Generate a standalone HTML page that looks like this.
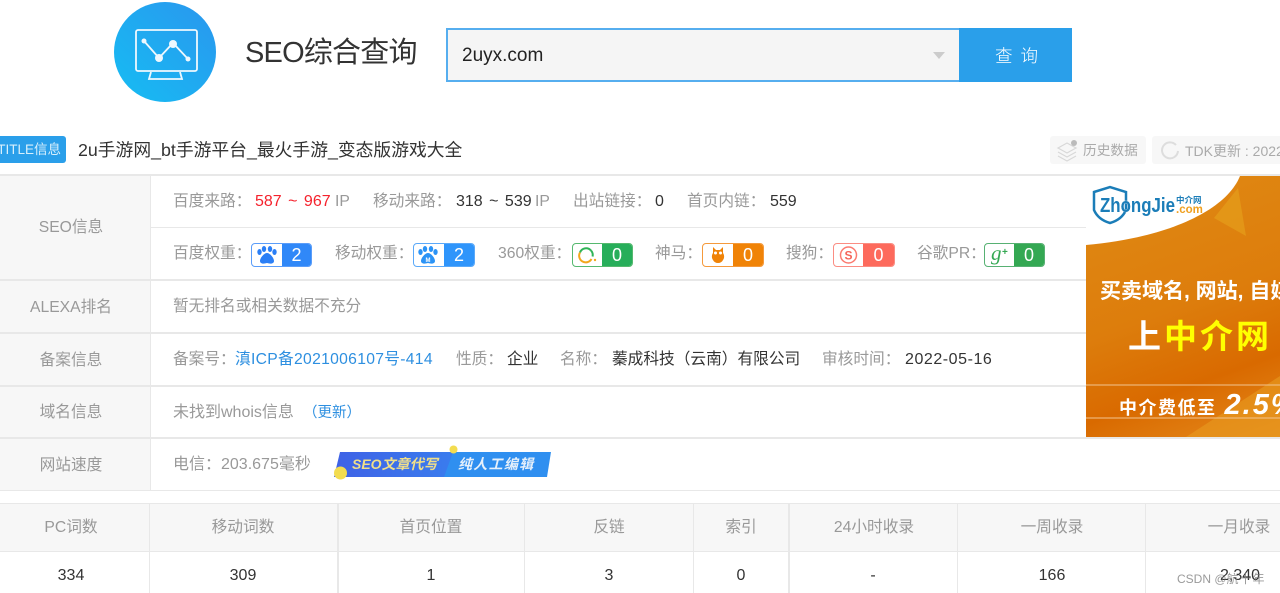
<!DOCTYPE html>
<html lang="zh">
<head>
<meta charset="utf-8">
<title>SEO综合查询</title>
<style>
html,body{margin:0;padding:0;background:#fff;}
body{width:1280px;height:593px;position:relative;overflow:hidden;font-family:"Liberation Sans","Noto Sans CJK SC",sans-serif;font-size:15.7px;color:#999;}
.t{position:absolute;white-space:nowrap;line-height:22px;height:22px;}
.d{color:#333;font-size:16px;}
.c{transform:translateX(-50%);}
.l{position:absolute;background:#e8e8e8;}
.b{position:absolute;top:243px;height:24px;box-sizing:border-box;border:1px solid;border-radius:4px;overflow:hidden;background:#fff;}
.b i{position:absolute;right:0;top:0;bottom:0;color:#fff;font-style:normal;text-align:center;font-size:18px;line-height:23px;}
.b svg{position:absolute;left:0;top:0;}
</style>
</head>
<body>
<!-- logo -->
<svg style="position:absolute;left:114px;top:2px" width="102" height="100" viewBox="0 0 102 100">
<defs><linearGradient id="g" x1="0" y1="1" x2="1" y2="0"><stop offset="0" stop-color="#16bdf3"/><stop offset="1" stop-color="#2a96ee"/></linearGradient></defs>
<ellipse cx="51" cy="50" rx="51" ry="50" fill="url(#g)"/>
<path d="M24 28h57a2 2 0 0 1 2 2v37a2 2 0 0 1-2 2H24a2 2 0 0 1-2-2V30a2 2 0 0 1 2-2z" fill="none" stroke="#eef8fe" stroke-width="1.800"/>
<path d="M37 70l-2 7h33l-2-7" fill="none" stroke="#eef8fe" stroke-width="1.800"/>
<path d="M30 39L45 56 59 41 74 57" fill="none" stroke="#eef8fe" stroke-width="1.800"/>
<circle cx="30" cy="39" r="2.500" fill="#eef8fe"/><circle cx="45" cy="56" r="4" fill="#eef8fe"/><circle cx="59" cy="42" r="4" fill="#eef8fe"/><circle cx="74" cy="57" r="2.500" fill="#eef8fe"/>
</svg>
<div class="t" style="left:245px;top:34px;height:38px;line-height:38px;font-size:29px;color:#333;letter-spacing:-.8px">SEO综合查询</div>

<!-- search -->
<div style="position:absolute;left:446px;top:28px;width:514px;height:54px;box-sizing:border-box;border:2px solid #56aeef;border-right:none;background:#f5f5f5"></div>
<div class="t" style="left:462px;top:45px;font-size:19px;color:#222">2uyx.com</div>
<div style="position:absolute;left:933px;top:52px;width:0;height:0;border-left:6px solid transparent;border-right:6px solid transparent;border-top:7px solid #ccc"></div>
<div style="position:absolute;left:959px;top:28px;width:113px;height:54px;background:#2a9fea;color:#fff;line-height:56px;font-size:17.500px;letter-spacing:8px;box-sizing:border-box;padding-left:36px;font-weight:300">查询</div>

<!-- title -->
<div style="position:absolute;left:-10px;top:136px;width:76px;height:27px;background:#2a9fea;border-radius:3px;color:#d8effc;font-size:13.500px;line-height:28px;text-align:right"><span style="margin-right:5px">TITLE信息</span></div>
<div class="t" style="left:78px;top:139px;font-size:17.800px;color:#333">2u手游网_bt手游平台_最火手游_变态版游戏大全</div>

<div style="position:absolute;left:1050px;top:136px;width:96px;height:28px;background:#f7f7f7;border-radius:3px"></div>
<svg style="position:absolute;left:1056px;top:139px" width="24" height="24" viewBox="0 0 24 24" fill="none" stroke="#d8d8d8" stroke-width="1.200"><path d="M2 9l9-5 9 5-9 5zM2 13l9 5 9-5M2 17l9 5 9-5"/><circle cx="18" cy="4" r="3" fill="#bbb" stroke="none"/></svg>
<div class="t" style="left:1083px;top:140px;font-size:13.700px;color:#aaa">历史数据</div>
<div style="position:absolute;left:1152px;top:136px;width:140px;height:28px;background:#f7f7f7;border-radius:3px"></div>
<svg style="position:absolute;left:1160px;top:140px" width="20" height="20" viewBox="0 0 20 20" fill="none" stroke="#ddd" stroke-width="2"><path d="M16 5A8 8 0 1 0 18 11"/></svg>
<div class="t" style="left:1185px;top:140px;font-size:14px;color:#aaa">TDK更新 : 2022</div>

<!-- table 1 -->
<div style="position:absolute;left:0;top:175px;width:150px;height:315px;background:#f7f7f7"></div>
<div class="l" style="left:0;top:174px;width:1280px;height:2px"></div>
<div class="l" style="left:150px;top:227px;width:936px;height:1px"></div>
<div class="l" style="left:0;top:279px;width:1086px;height:2px"></div>
<div class="l" style="left:0;top:332px;width:1086px;height:2px"></div>
<div class="l" style="left:0;top:385px;width:1086px;height:2px"></div>
<div class="l" style="left:0;top:437px;width:1280px;height:2px"></div>
<div class="l" style="left:0;top:490px;width:1280px;height:1px"></div>
<div class="l" style="left:150px;top:175px;width:1px;height:315px"></div>

<div class="t c" style="left:71px;top:217px">SEO信息</div>
<div class="t c" style="left:71px;top:297px">ALEXA排名</div>
<div class="t c" style="left:71px;top:350px">备案信息</div>
<div class="t c" style="left:71px;top:402px">域名信息</div>
<div class="t c" style="left:71px;top:455px">网站速度</div>

<div class="t" style="left:173px;top:191px">百度来路：</div>
<div class="t" style="left:255px;top:191px;color:#f5222d;font-size:16px;word-spacing:2px">587 ~ 967</div><div class="t" style="left:335px;top:191px">IP</div>
<div class="t" style="left:373px;top:191px">移动来路：</div>
<div class="t d" style="left:456px;top:191px;word-spacing:2px">318 ~ 539</div><div class="t" style="left:535px;top:191px">IP</div>
<div class="t" style="left:573px;top:191px">出站链接：</div>
<div class="t d" style="left:655px;top:191px">0</div>
<div class="t" style="left:687px;top:191px">首页内链：</div>
<div class="t d" style="left:770px;top:191px">559</div>

<div class="t" style="left:173px;top:243px">百度权重：</div>
<div class="b" style="left:251px;width:61px;border-color:#5b9df9"><svg width="30" height="22" viewBox="0 0 30 22" fill="#2b7ff6"><ellipse cx="7.500" cy="8" rx="2.200" ry="3"/><ellipse cx="12" cy="5" rx="2.200" ry="3"/><ellipse cx="18" cy="5" rx="2.200" ry="3"/><ellipse cx="22.500" cy="8" rx="2.200" ry="3"/><path d="M15 9c3 0 7 5 7 8 0 3-4 3-7 2-3 1-7 1-7-2 0-3 4-8 7-8z"/></svg><i style="width:29px;background:#3088f8">2</i></div>
<div class="t" style="left:335px;top:243px">移动权重：</div>
<div class="b" style="left:413px;width:62px;border-color:#5ba9f9"><svg width="30" height="22" viewBox="0 0 30 22" fill="#2b93f6"><ellipse cx="6.500" cy="8" rx="2.200" ry="3"/><ellipse cx="11" cy="5" rx="2.200" ry="3"/><ellipse cx="17" cy="5" rx="2.200" ry="3"/><ellipse cx="21.500" cy="8" rx="2.200" ry="3"/><path d="M14 9c3 0 7 5 7 8 0 3-4 3-7 2-3 1-7 1-7-2 0-3 4-8 7-8z"/><text x="14" y="18" font-size="6" font-weight="bold" text-anchor="middle" fill="#fff" font-family="Liberation Sans">M</text></svg><i style="width:30px;background:#2f95fb">2</i></div>
<div class="t" style="left:498px;top:243px">360权重：</div>
<div class="b" style="left:572px;width:61px;border-color:#56b96f"><svg width="30" height="22" viewBox="0 0 30 22" fill="none"><path d="M18 6.500a6.500 6.500 0 0 0-11 2" stroke="#2fb457" stroke-width="2"/><path d="M7 8.500a6.500 6.500 0 0 0 11.500 6.500" stroke="#f2a71d" stroke-width="2"/><path d="M18 6.500a6.500 6.500 0 0 1 1.500 6" stroke="#2fb457" stroke-width="2"/><circle cx="22" cy="16" r="1.200" fill="#f2a71d"/></svg><i style="width:30px;background:#27ae5a">0</i></div>
<div class="t" style="left:655px;top:243px">神马：</div>
<div class="b" style="left:702px;width:62px;border-color:#f59a3c"><svg width="30" height="22" viewBox="0 0 30 22" fill="#f08307"><path d="M10 3l3 3h4l3-3v6c1.500 2 1.500 5 0 7-1 2-2.800 3-5 3s-4-1-5-3c-1.500-2-1.500-5 0-7z"/><circle cx="12.500" cy="9" r="1.500" fill="#fff"/><circle cx="17.500" cy="9" r="1.500" fill="#fff"/></svg><i style="width:30px;background:#f08307">0</i></div>
<div class="t" style="left:786px;top:243px">搜狗：</div>
<div class="b" style="left:833px;width:62px;border-color:#fb8d83"><svg width="30" height="22" viewBox="0 0 30 22" fill="none"><circle cx="14.500" cy="11" r="8" stroke="#fb7b70" stroke-width="1.500"/><text x="14.500" y="15.500" font-size="12" font-weight="bold" text-anchor="middle" fill="#f5655a" font-family="Liberation Sans">S</text></svg><i style="width:31px;background:#fd6a5c">0</i></div>
<div class="t" style="left:917px;top:243px">谷歌PR：</div>
<div class="b" style="left:984px;width:61px;border-color:#57b173"><svg width="30" height="22" viewBox="0 0 30 22"><text x="6" y="16" font-size="21" font-style="italic" fill="#34a853" font-family="Liberation Serif">g</text><text x="17" y="11" font-size="10" font-weight="bold" fill="#34a853" font-family="Liberation Sans">+</text></svg><i style="width:30px;background:#34a853">0</i></div>

<div class="t" style="left:173px;top:296px">暂无排名或相关数据不充分</div>

<div class="t" style="left:173px;top:349px">备案号：</div>
<div class="t" style="left:235px;top:349px;color:#2d8fe0;letter-spacing:.3px">滇ICP备2021006107号-414</div>
<div class="t" style="left:456px;top:349px">性质：</div>
<div class="t d" style="left:507px;top:349px;font-size:15.700px">企业</div>
<div class="t" style="left:560px;top:349px">名称：</div>
<div class="t d" style="left:612px;top:349px;font-size:15.700px">蓁成科技（云南）有限公司</div>
<div class="t" style="left:822px;top:349px">审核时间：</div>
<div class="t d" style="left:905px;top:349px;letter-spacing:.55px">2022-05-16</div>

<div class="t" style="left:173px;top:402px;font-size:16px">未找到whois信息</div>
<div class="t" style="left:303px;top:402px;color:#2d8fe0;font-size:14.500px">（更新）</div>

<div class="t" style="left:173px;top:454px;font-size:16px">电信：203.675毫秒</div>
<svg style="position:absolute;left:332px;top:444px" width="222" height="38" viewBox="0 0 222 38">
<defs><linearGradient id="bl" x1="0" x2="1"><stop offset="0" stop-color="#3f62e6"/><stop offset="1" stop-color="#3a7cee"/></linearGradient></defs>
<path d="M8 8H122L113 33H2z" fill="url(#bl)"/>
<path d="M121 8H219L215 33H112z" fill="#2f8ff0"/>
<circle cx="8.500" cy="29" r="6.500" fill="#f3dc4f"/>
<circle cx="121.500" cy="5.500" r="4" fill="#f3dc4f"/>
<text x="20" y="25" font-size="14" font-weight="bold" font-style="italic" fill="#f0df8a" font-family="Liberation Sans,Noto Sans CJK SC,sans-serif">SEO文章代写</text>
<text x="126" y="25" font-size="14" font-weight="bold" font-style="italic" fill="#e6f0fb" font-family="Liberation Sans,Noto Sans CJK SC,sans-serif" letter-spacing="1.300">纯人工编辑</text>
</svg>

<!-- ad -->
<div style="position:absolute;left:1086px;top:176px;width:194px;height:261px;overflow:hidden;background:linear-gradient(160deg,#e08a14 0%,#dd7d0c 50%,#d96a00 75%,#e58a1c 100%)">
<svg style="position:absolute;left:0;top:0" width="194" height="261" viewBox="0 0 194 261">
<path d="M0 0H154C140 35 80 62 0 69z" fill="#fff"/>
<path d="M128 42L152 12 160 60z" fill="#e9ac22" opacity=".45"/>
<path d="M100 261L194 200V261z" fill="#e89b20" opacity=".6"/>
<path d="M0 209H194M0 242H194" stroke="#f2c48f" stroke-width="1"/>
<path d="M8 16L24 11 40 16V34C37 41 31 45 24 47 17 45 11 41 8 34z" fill="none" stroke="#1b7db8" stroke-width="2.500"/>
<text x="14" y="36" font-size="20" font-weight="bold" fill="#1b7db8" font-family="Liberation Sans" textLength="75" lengthAdjust="spacingAndGlyphs" stroke="#fff" stroke-width=".4" paint-order="stroke">ZhongJie</text>
<text x="90" y="27" font-size="8.500" font-weight="bold" fill="#1b7db8" font-family="Noto Sans CJK SC">中介网</text>
<text x="90" y="37" font-size="11.500" font-weight="bold" fill="#f0a020" font-family="Liberation Sans">.com</text>
</svg>
<div class="t" style="left:14px;top:105px;font-size:21px;font-weight:bold;color:#fff">买卖域名, 网站, 自媒体</div>
<div class="t" style="left:42px;top:141px;font-size:33px;line-height:40px;height:40px;font-weight:bold;color:#fff;letter-spacing:3px">上<span style="color:#ffff00">中介网</span></div>
<div class="t" style="left:33px;top:218px;font-size:18px;font-weight:bold;color:#fff;letter-spacing:1.500px">中介费低至<span style="font-size:29px;font-style:italic;letter-spacing:2px;margin-left:-2px"> 2.5%</span></div>
</div>

<!-- table 2 -->
<div style="position:absolute;left:0;top:503px;width:1280px;height:48px;background:#f7f7f7"></div>
<div class="l" style="left:0;top:503px;width:1280px;height:1px"></div>
<div class="l" style="left:0;top:551px;width:1280px;height:1px"></div>
<div class="l" style="left:149px;top:503px;width:1px;height:90px"></div>
<div class="l" style="left:337px;top:503px;width:2px;height:90px"></div>
<div class="l" style="left:524px;top:503px;width:1px;height:90px"></div>
<div class="l" style="left:693px;top:503px;width:1px;height:90px"></div>
<div class="l" style="left:788px;top:503px;width:2px;height:90px"></div>
<div class="l" style="left:957px;top:503px;width:1px;height:90px"></div>
<div class="l" style="left:1145px;top:503px;width:1px;height:90px"></div>

<div class="t c" style="left:71px;top:517px">PC词数</div>
<div class="t c" style="left:243px;top:517px">移动词数</div>
<div class="t c" style="left:431px;top:517px">首页位置</div>
<div class="t c" style="left:609px;top:517px">反链</div>
<div class="t c" style="left:741px;top:517px">索引</div>
<div class="t c" style="left:874px;top:517px">24小时收录</div>
<div class="t c" style="left:1052px;top:517px">一周收录</div>
<div class="t c" style="left:1239px;top:517px">一月收录</div>

<div class="t c d" style="left:71px;top:565px">334</div>
<div class="t c d" style="left:243px;top:565px">309</div>
<div class="t c d" style="left:431px;top:565px">1</div>
<div class="t c d" style="left:609px;top:565px">3</div>
<div class="t c d" style="left:741px;top:565px">0</div>
<div class="t c d" style="left:873px;top:565px">-</div>
<div class="t c d" style="left:1052px;top:565px">166</div>
<div class="t c d" style="left:1240px;top:565px">2,340</div>
<div class="t" style="left:1177px;top:568px;font-size:12px;color:rgba(120,120,120,.75)">CSDN @<span style="letter-spacing:1px">航十年</span></div>
</body>
</html>
